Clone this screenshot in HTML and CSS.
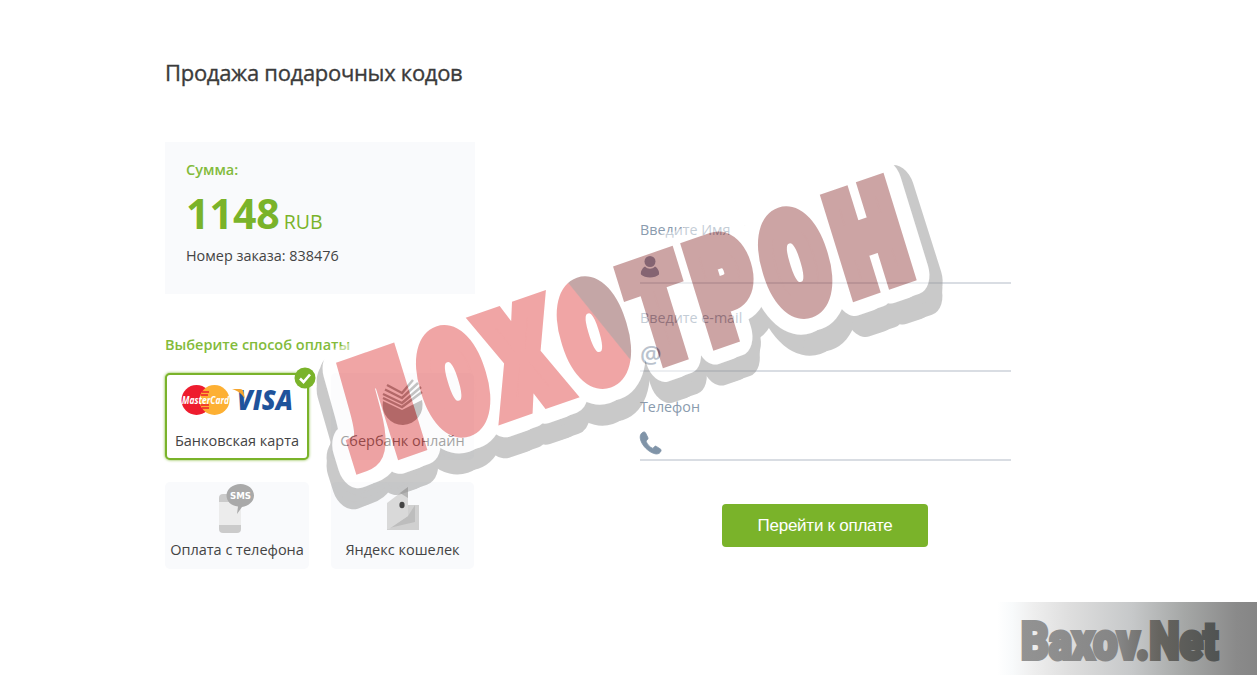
FILE: index.html
```
<!DOCTYPE html>
<html lang="ru">
<head>
    <meta charset="UTF-8">
    <meta name="viewport" content="width=device-width, initial-scale=1.0">
    <title>Продажа подарочных кодов</title>
    <link rel="stylesheet" href="styles.css">
</head>
<body>
    <div class="container">
        <h1>Продажа подарочных кодов</h1>
        <div class="columns">
            <div class="left">
                <div class="order">
                    <div class="order-label">Сумма:</div>
                    <div class="order-sum"><b>1148</b> <span>RUB</span></div>
                    <div class="order-number">Номер заказа: 838476</div>
                </div>
                <h2>Выберите способ оплаты</h2>
                <div class="methods">
                    <div class="method active">
                        <svg class="check" width="22" height="22" viewBox="0 0 22 22">
                            <circle cx="11" cy="11" r="10.5" fill="#7ab32a"/>
                            <path d="M6 11.5l3.500 3.500L16 7.500" fill="none" stroke="#fff" stroke-width="2.600"/>
                        </svg>
                        <svg width="116" height="34" viewBox="0 0 116 34">
                            <circle cx="17.500" cy="17" r="15" fill="#ee1c2e"/>
                            <circle cx="35.500" cy="17" r="15" fill="#fdb033"/>
                            <path d="M23 9h7M22 12h7M22 22h8M23 25h7" stroke="#ee1c2e" stroke-width="1.300"/>
                            <text class="mc" x="3" y="20.500" textLength="47" lengthAdjust="spacingAndGlyphs">MasterCard</text>
                            <text class="visa" x="58" y="27" textLength="56" lengthAdjust="spacingAndGlyphs">VISA</text>
                            <path d="M53 6h8c2 0 3 1 3.500 3l1.500 7C64 12 59 7.500 53 6z" fill="#f5a52f"/>
                        </svg>
                        <span>Банковская карта</span>
                    </div>
                    <div class="method">
                        <svg width="42" height="46" viewBox="0 0 42 46">
                            <path d="M1 22l19 9 20-10a20 20 0 1 1-39 1z" fill="#858585"/>
                            <path d="M5 6l15 8L31 1M3 10.500l17 8.500L36 4M1 15l19 9L39 8M1 19l19 9L40 13" fill="none" stroke="#858585" stroke-width="2.400"/>
                        </svg>
                        <span>Сбербанк онлайн</span>
                    </div>
                    <div class="method">
                        <svg width="36" height="50" viewBox="0 0 36 50">
                            <rect x="0" y="10" width="22" height="39" rx="4" fill="#cbcbcb"/>
                            <rect x="0" y="18" width="22" height="23" fill="#ececec"/>
                            <path d="M21.500 0C29 0 35 5 35 11.500S29 22 23 23l-5 7 1-7.500C12 22 7.500 17 7.500 11.500 7.500 5 14 0 21.500 0z" fill="#a9a9a9"/>
                            <text class="sms" x="11" y="15" textLength="21" lengthAdjust="spacingAndGlyphs">SMS</text>
                        </svg>
                        <span>Оплата с телефона</span>
                    </div>
                    <div class="method">
                        <svg class="wallet" width="32" height="43" viewBox="0 0 32 43">
                            <path d="M0 18h32v25H0z" fill="#d0d0d0"/>
                            <path d="M2 41l19-12 7-11v17z" fill="#bdbdbd"/>
                            <path d="M0 16L21 0v29L2 42H0z" fill="#d9d9d9"/>
                            <path d="M13 6l8-6v11z" fill="#b5b5b5"/>
                            <ellipse cx="15" cy="18" rx="2.600" ry="3.200" fill="#444"/>
                        </svg>
                        <span>Яндекс кошелек</span>
                    </div>
                </div>
            </div>
            <form class="form">
                <div class="field">
                    <label>Введите Имя</label>
                    <svg width="22" height="24" viewBox="0 0 22 24">
                        <circle cx="10" cy="6.500" r="5.500" fill="#6f7f9b"/>
                        <path d="M5 11.500c3 3 7 3 10 0 3.500 2 4.500 6 4 8-4 4-14 4-18 0-.5-2 .5-6 4-8z" fill="#6f7f9b"/>
                    </svg>
                </div>
                <div class="field">
                    <label>Введите e-mail</label>
                    <span class="at">@</span>
                </div>
                <div class="field">
                    <label>Телефон</label>
                    <svg width="22" height="24" viewBox="0 0 22 24">
                        <path d="M3.500 0C1 1 0 3 .2 6 1 13 9 21 16 22c3 0 4-1 5-3 .3-1 0-1.500-.6-2l-4-2.600c-.8-.5-1.500-.3-2 .3l-1.500 1.700C10 15.500 7 12 6 9l1.600-1.500c.5-.5.6-1.200.3-1.900L5.500.7C5 0 4.300-.3 3.500 0z" fill="#8094a8" stroke="#8094a8" stroke-width=".8"/>
                    </svg>
                </div>
                <button type="button">Перейти к оплате</button>
            </form>
        </div>
    </div>

    <svg class="stamp" width="1257" height="600" viewBox="0 0 1257 600">
        <defs>
            <linearGradient id="fade" x1="0" y1="1" x2="1" y2="0">
                <stop offset=".6" stop-color="#e24d4d"/>
                <stop offset=".61" stop-color="#8b5050"/>
            </linearGradient>
        </defs>
        <g class="stamp-body">
            <g class="shadow">
                <use href="#plate" transform="translate(-16 21) scale(1.031 1)"/>
                <use href="#plate" transform="translate(-16 13) scale(1.031 1)"/>
                <use href="#plate" transform="translate(-12 6) scale(1.027 1)"/>
            </g>
            <g class="outline">
                <g id="plate">
                    <use href="#word" transform="translate(-5 2)"/>
                    <use href="#word" transform="translate(5 -2)"/>
                </g>
            </g>
            <g class="ink">
                <g id="word" transform="matrix(.945 -.328 .295 .956 358 474)">
                    <text transform="translate(4 -10) scale(.56 1)" textLength="120" lengthAdjust="spacingAndGlyphs">Л</text>
                    <text transform="translate(88 -10) scale(.56 1)" textLength="108" lengthAdjust="spacingAndGlyphs">О</text>
                    <text transform="translate(161 -10) scale(.56 1)" textLength="109" lengthAdjust="spacingAndGlyphs">Х</text>
                    <text class="half" transform="translate(237 -10) scale(.56 1)" textLength="108" lengthAdjust="spacingAndGlyphs">О</text>
                    <text class="late" transform="translate(310 -10) scale(.56 1)" textLength="95" lengthAdjust="spacingAndGlyphs">Т</text>
                    <text class="late" transform="translate(378 -10) scale(.56 1)" textLength="101" lengthAdjust="spacingAndGlyphs">Р</text>
                    <text class="late" transform="translate(450 -10) scale(.56 1)" textLength="108" lengthAdjust="spacingAndGlyphs">О</text>
                    <text class="late" transform="translate(526 -10) scale(.56 1)" textLength="113" lengthAdjust="spacingAndGlyphs">Н</text>
                </g>
            </g>
        </g>
    </svg>

    <div class="watermark">
        <svg width="260" height="73" viewBox="0 0 260 73">
            <defs>
                <linearGradient id="wm" x1="0" y1="0" x2="1" y2="0">
                    <stop offset="0" stop-color="#939393"/>
                    <stop offset=".5" stop-color="#858585"/>
                    <stop offset=".7" stop-color="#66645f"/>
                    <stop offset="1" stop-color="#505352"/>
                </linearGradient>
            </defs>
            <text x="24" y="57" textLength="197" lengthAdjust="spacingAndGlyphs">Baxov.Net</text>
        </svg>
    </div>
</body>
</html>
```
FILE: styles.css
```
body {
    margin: 0;
    min-height: 675px;
    position: relative;
    overflow: hidden;
    background-color: #fff;
    color: #444;
    font-family: "Open Sans", "Noto Sans", sans-serif;
    font-size: 15px;
}

svg {
    overflow: visible;
}

.container {
    width: 846px;
    margin-left: 165px;
    padding-top: 56px;
}

h1 {
    margin: 0 0 54px;
    font-size: 22px;
    line-height: 32px;
    font-weight: 500;
    letter-spacing: -.3px;
    -webkit-text-stroke: .35px #3b3b3b;
    color: #3b3b3b;
}

.columns {
    display: flex;
    justify-content: space-between;
}

.left {
    width: 310px;
}

.order {
    height: 152px;
    box-sizing: border-box;
    padding: 18px 20px 18px 21px;
    background-color: #f9fafc;
}

.order-label {
    line-height: 20px;
    font-size: 14.5px;
    font-weight: 600;
    color: #83bb3b;
}

.order-sum {
    height: 56px;
    line-height: 67px;
    color: #7ab32a;
}

.order-sum b {
    font-size: 41px;
}

.order-sum span {
    font-size: 19.5px;
}

.order-number {
    margin-top: 10px;
    line-height: 20px;
    font-size: 14.4px;
}

h2 {
    margin: 41px 0 18px;
    line-height: 20px;
    font-size: 14.5px;
    font-weight: 600;
    color: #83bb3b;
}

.methods {
    display: grid;
    grid-template-columns: 144px 143px;
    gap: 22px;
}

.method {
    position: relative;
    height: 87px;
    box-sizing: border-box;
    display: flex;
    flex-direction: column;
    align-items: center;
    justify-content: flex-end;
    padding-bottom: 9px;
    border-radius: 5px;
    background-color: #f9fafc;
    white-space: nowrap;
}

.method span {
    line-height: 20px;
    font-size: 14.5px;
}

.method svg {
    margin-bottom: 6px;
}

.method .wallet {
    margin-bottom: 10px;
}

.method.active {
    padding-bottom: 7px;
    border: 2px solid #7ab32a;
    background-color: #fff;
    box-shadow: 0 0 3px #7ab32a;
}

.method.active svg {
    margin-bottom: 14px;
}

.method .check {
    position: absolute;
    top: -8px;
    right: -9px;
}

.mc {
    font: italic bold 10px "Open Sans", sans-serif;
    fill: #fff;
}

.visa {
    font: italic 800 29px "Open Sans", sans-serif;
    fill: #1f539b;
}

.sms {
    font: bold 9px "DejaVu Sans", sans-serif;
    fill: #fff;
}

.form {
    width: 371px;
    padding-top: 78px;
    display: flex;
    flex-direction: column;
}

.field {
    height: 88.4px;
    box-sizing: border-box;
    display: flex;
    flex-direction: column;
    color: #8a9bae;
}

.field::after {
    content: "";
    height: 2px;
    margin-top: 3px;
    background-color: #d9dde3;
}

.field label {
    line-height: 20px;
    margin-bottom: 15px;
    font-size: 14.3px;
}

.field .at {
    height: 24px;
    line-height: 21px;
    font-size: 24px;
    font-weight: 600;
    color: #74859b;
}

button {
    align-self: center;
    width: 206px;
    height: 43px;
    margin: 19px 1px 0 0;
    border: none;
    border-radius: 4px;
    background-color: #7ab32a;
    color: #fff;
    font-family: "Liberation Sans", Arial, sans-serif;
    font-size: 17px;
    letter-spacing: -.25px;
    cursor: pointer;
}

.stamp {
    position: absolute;
    top: 0;
    left: 0;
    pointer-events: none;
}

.stamp text {
    font-family: Roboto, sans-serif;
    font-size: 130px;
    font-weight: 900;
}

.stamp-body {
    opacity: .5;
}

.ink {
    --half: url(#fade);
    --late: #9b4b4b;
    fill: #e24d4d;
    stroke: #e24d4d;
    stroke-width: 20px;
}

.half {
    fill: var(--half);
    stroke: var(--half);
}

.late {
    fill: var(--late);
    stroke: var(--late);
}

.outline {
    --half: #fff;
    --late: #fff;
    fill: #fff;
    stroke: #fff;
    stroke-width: 48px;
    stroke-linejoin: round;
}

.shadow {
    --half: #959595;
    --late: #959595;
    fill: #959595;
    stroke: #959595;
    stroke-width: 48px;
    stroke-linejoin: round;
}

.watermark {
    position: absolute;
    right: 0;
    bottom: 0;
    width: 260px;
    height: 73px;
    background: linear-gradient(to right, #fff 0, #f8fafb 6%, #eee 14%, #dedede 28%, #c6c8c9 52%, #a5a7a6 72%, #8a8a8a 92%, #858585);
}

.watermark text {
    font-family: Roboto, sans-serif;
    font-size: 52px;
    font-weight: 900;
    fill: url(#wm);
    stroke: url(#wm);
    stroke-width: 4px;
}
```
